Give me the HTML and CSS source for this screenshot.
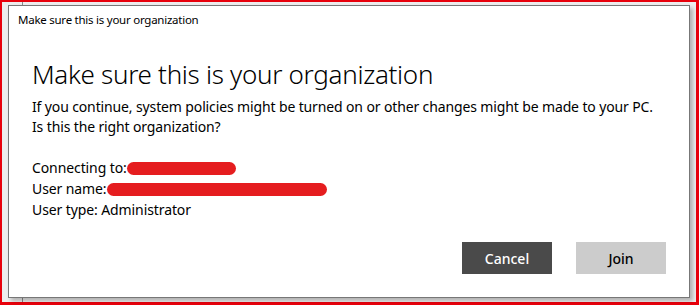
FILE: index.html
```html
<!DOCTYPE html>
<html lang="en">
<head>
  <meta charset="UTF-8" />
  <title>Make sure this is your organization</title>
  <link rel="stylesheet" href="styles.css">
</head>
<body>
  <div class="frame">
    <div class="dialog">
      <div class="titlebar">Make sure this is your organization</div>
      <div class="content">
        <h1>Make sure this is your organization</h1>
        <p class="intro">If you continue, system policies might be turned on or other changes might be made to your PC.<br>Is this the right organization?</p>
        <div class="details">
          <div>Connecting to:<span class="redact redact-short"></span></div>
          <div>User name:<span class="redact redact-long"></span></div>
          <div>User type: Administrator</div>
        </div>
      </div>
      <div class="actions">
        <button class="btn btn-cancel">Cancel</button>
        <button class="btn btn-join">Join</button>
      </div>
    </div>
  </div>
</body>
</html>
```

FILE: styles.css
```css
html, body {
  margin: 0;
  height: 100%;
}

* {
  box-sizing: border-box;
}

body {
  font-family: "Noto Sans", "Open Sans", sans-serif;
  color: #000;
}

/* red outline round the whole capture */
.frame {
  width: 699px;
  height: 305px;
  border-style: solid;
  border-color: #e8000b;
  border-width: 2px 3px 3px 2px;
  background:
    linear-gradient(to right, transparent 20px, #8a8a8a 20px, #8a8a8a 21px, transparent 21px),
    #ededed;
  padding: 3px 0 0 6px;
}

.dialog {
  width: 682px;
  height: 293px;
  background: #fff;
  border: 1px solid #777;
  box-shadow: 3px 3px 4px rgba(0, 0, 0, 0.25);
  display: flex;
  flex-direction: column;
}

.titlebar {
  font-size: 11.5px;
  padding: 6px 0 0 9px;
  height: 30px;
  letter-spacing: -0.25px;
}

.content {
  flex: 1;
  padding: 0 0 0 23px;
}

h1 {
  font-weight: 300;
  font-size: 26px;
  margin: 22px 0 7px;
  line-height: 32px;
  letter-spacing: -0.3px;
}

.intro {
  font-size: 14px;
  line-height: 20px;
  letter-spacing: -0.13px;
  margin: 0 0 20px;
}

.details {
  font-size: 14px;
  line-height: 21px;
  letter-spacing: -0.1px;
}

.redact {
  display: inline-block;
  height: 13px;
  background: #e51d1f;
  border-radius: 7px;
  vertical-align: -2px;
}

.redact-short {
  width: 109px;
}

.redact-long {
  width: 220px;
}

.actions {
  display: flex;
  justify-content: flex-end;
  gap: 24px;
  padding: 0 23px 23px 0;
}

.btn {
  width: 90px;
  height: 32px;
  border: none;
  font-family: inherit;
  font-size: 14px;
  font-weight: 500;
}

.btn-cancel {
  background: #4a4a4a;
  color: #fff;
}

.btn-join {
  background: #cccccc;
  color: #000;
}
```
